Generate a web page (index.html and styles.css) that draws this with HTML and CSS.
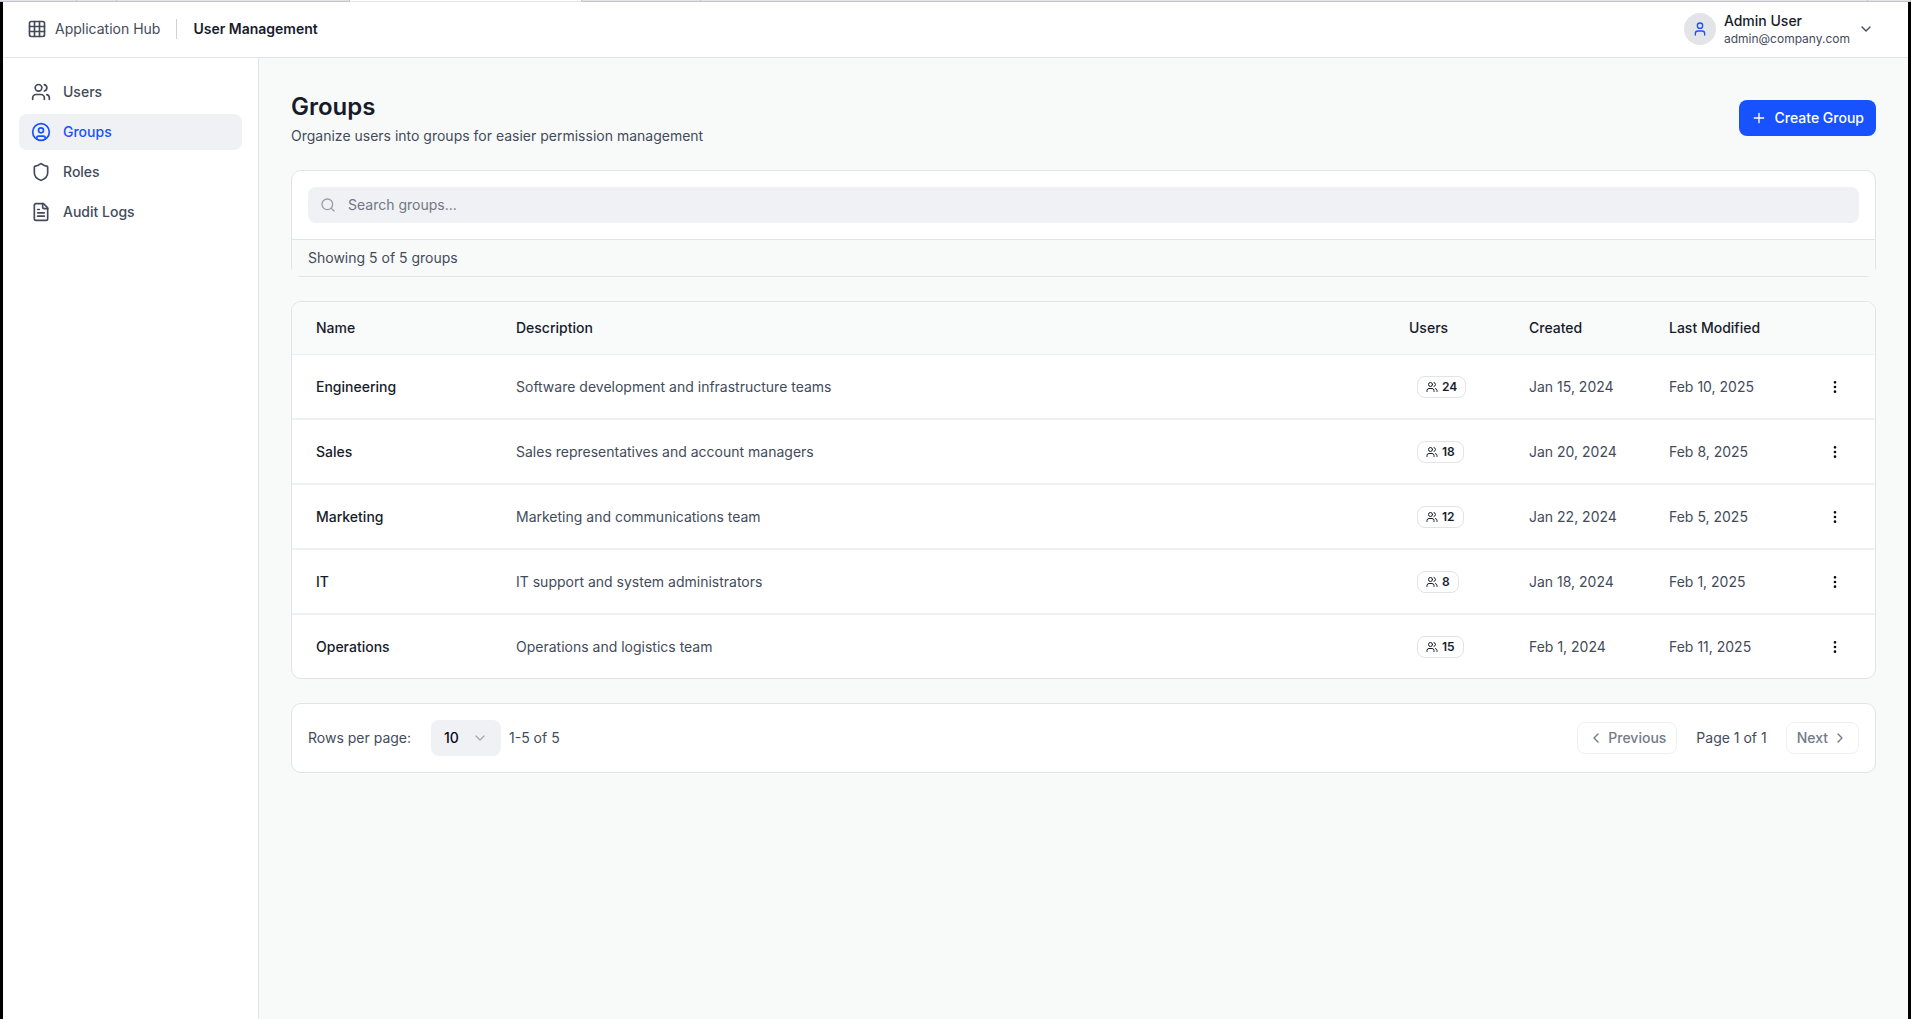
FILE: index.html
```html
<!DOCTYPE html>
<html lang="en">
<head>
<meta charset="utf-8">
<meta name="viewport" content="width=device-width, initial-scale=1">
<title>User Management – Groups</title>
<link rel="stylesheet" href="styles.css">
</head>
<body>
<svg class="sprite" aria-hidden="true">
  <symbol id="i-grid" viewBox="0 0 24 24"><rect width="18" height="18" x="3" y="3" rx="2"/><path d="M3 9h18M3 15h18M9 3v18M15 3v18"/></symbol>
  <symbol id="i-users" viewBox="0 0 24 24"><path d="M16 21v-2a4 4 0 0 0-4-4H6a4 4 0 0 0-4 4v2"/><circle cx="9" cy="7" r="4"/><path d="M22 21v-2a4 4 0 0 0-3-3.87M16 3.13a4 4 0 0 1 0 7.75"/></symbol>
  <symbol id="i-group" viewBox="0 0 24 24"><circle cx="12" cy="12" r="10"/><circle cx="12" cy="10" r="3"/><path d="M7 20.662V19a2 2 0 0 1 2-2h6a2 2 0 0 1 2 2v1.662"/></symbol>
  <symbol id="i-shield" viewBox="0 0 24 24"><path d="M20 13c0 5-3.5 7.5-7.66 8.95a1 1 0 0 1-.67-.01C7.5 20.5 4 18 4 13V6a1 1 0 0 1 1-1c2 0 4.500-1.200 6.240-2.720a1.170 1.170 0 0 1 1.520 0C14.510 3.810 17 5 19 5a1 1 0 0 1 1 1z"/></symbol>
  <symbol id="i-file" viewBox="0 0 24 24"><path d="M15 2H6a2 2 0 0 0-2 2v16a2 2 0 0 0 2 2h12a2 2 0 0 0 2-2V7Z"/><path d="M14 2v4a2 2 0 0 0 2 2h4M10 9H8M16 13H8M16 17H8"/></symbol>
  <symbol id="i-user" viewBox="0 0 24 24"><path d="M19 21v-2a4 4 0 0 0-4-4H9a4 4 0 0 0-4 4v2"/><circle cx="12" cy="7" r="4"/></symbol>
  <symbol id="i-down" viewBox="0 0 24 24"><path d="m6 9 6 6 6-6"/></symbol>
  <symbol id="i-left" viewBox="0 0 24 24"><path d="m15 18-6-6 6-6"/></symbol>
  <symbol id="i-right" viewBox="0 0 24 24"><path d="m9 18 6-6-6-6"/></symbol>
  <symbol id="i-plus" viewBox="0 0 24 24"><path d="M5 12h14M12 5v14"/></symbol>
  <symbol id="i-search" viewBox="0 0 24 24"><circle cx="11" cy="11" r="8"/><path d="m21 21-4.300-4.300"/></symbol>
  <symbol id="i-more" viewBox="0 0 24 24"><circle cx="12" cy="12" r="1"/><circle cx="12" cy="5" r="1"/><circle cx="12" cy="19" r="1"/></symbol>
</svg>

<div class="tabstrip" aria-hidden="true"><span class="tab tab-a"></span><span class="tab tab-b"></span><span class="tab tab-c"></span><span class="tab tab-open"></span><span class="tab tab-d"></span><span class="tab tab-rest"></span><span class="tab tab-end"></span></div>

<div class="app">
  <header class="topbar">
    <a class="hub" href="#"><svg class="icon icon-lg"><use href="#i-grid"/></svg>Application Hub</a>
    <span class="divider"></span>
    <strong class="product">User Management</strong>
    <button class="account" type="button">
      <span class="avatar"><svg class="icon"><use href="#i-user"/></svg></span>
      <span class="who"><span class="who-name">Admin User</span><span class="who-mail">admin@company.com</span></span>
      <svg class="icon"><use href="#i-down"/></svg>
    </button>
  </header>

  <div class="body">
    <nav class="sidebar" aria-label="Main">
      <a class="nav-item" href="#"><svg class="icon icon-lg"><use href="#i-users"/></svg>Users</a>
      <a class="nav-item active" href="#" aria-current="page"><svg class="icon icon-lg"><use href="#i-group"/></svg>Groups</a>
      <a class="nav-item" href="#"><svg class="icon icon-lg"><use href="#i-shield"/></svg>Roles</a>
      <a class="nav-item" href="#"><svg class="icon icon-lg"><use href="#i-file"/></svg>Audit Logs</a>
    </nav>

    <main class="content">
      <div class="page-head">
        <div>
          <h1>Groups</h1>
          <p>Organize users into groups for easier permission management</p>
        </div>
        <button class="create" type="button"><svg class="icon"><use href="#i-plus"/></svg>Create Group</button>
      </div>

      <section class="card">
        <div class="card-row">
          <label class="search"><svg class="icon"><use href="#i-search"/></svg><input type="search" placeholder="Search groups..." aria-label="Search groups"></label>
        </div>
        <p class="count">Showing 5 of 5 groups</p>
      </section>

      <section class="card card-clip">
        <table>
          <colgroup><col class="c-name"><col><col class="c-users"><col class="c-date"><col class="c-date"><col class="c-menu"></colgroup>
          <thead>
            <tr><th>Name</th><th>Description</th><th>Users</th><th>Created</th><th>Last Modified</th><th aria-label="Actions"></th></tr>
          </thead>
          <tbody>
            <tr><td class="name">Engineering</td><td>Software development and infrastructure teams</td><td><button class="badge" type="button"><svg class="icon icon-sm"><use href="#i-users"/></svg>24</button></td><td>Jan 15, 2024</td><td>Feb 10, 2025</td><td><button class="more" type="button" aria-label="Engineering actions"><svg class="icon"><use href="#i-more"/></svg></button></td></tr>
            <tr><td class="name">Sales</td><td>Sales representatives and account managers</td><td><button class="badge" type="button"><svg class="icon icon-sm"><use href="#i-users"/></svg>18</button></td><td>Jan 20, 2024</td><td>Feb 8, 2025</td><td><button class="more" type="button" aria-label="Sales actions"><svg class="icon"><use href="#i-more"/></svg></button></td></tr>
            <tr><td class="name">Marketing</td><td>Marketing and communications team</td><td><button class="badge" type="button"><svg class="icon icon-sm"><use href="#i-users"/></svg>12</button></td><td>Jan 22, 2024</td><td>Feb 5, 2025</td><td><button class="more" type="button" aria-label="Marketing actions"><svg class="icon"><use href="#i-more"/></svg></button></td></tr>
            <tr><td class="name">IT</td><td>IT support and system administrators</td><td><button class="badge" type="button"><svg class="icon icon-sm"><use href="#i-users"/></svg>8</button></td><td>Jan 18, 2024</td><td>Feb 1, 2025</td><td><button class="more" type="button" aria-label="IT actions"><svg class="icon"><use href="#i-more"/></svg></button></td></tr>
            <tr><td class="name">Operations</td><td>Operations and logistics team</td><td><button class="badge" type="button"><svg class="icon icon-sm"><use href="#i-users"/></svg>15</button></td><td>Feb 1, 2024</td><td>Feb 11, 2025</td><td><button class="more" type="button" aria-label="Operations actions"><svg class="icon"><use href="#i-more"/></svg></button></td></tr>
          </tbody>
        </table>
      </section>

      <section class="card card-row pager">
        <label for="rows">Rows per page:</label>
        <span class="select"><select id="rows"><option>10</option><option>25</option><option>50</option></select><svg class="icon"><use href="#i-down"/></svg></span>
        <span>1-5 of 5</span>
        <div class="pages">
          <button class="step" type="button" disabled><svg class="icon"><use href="#i-left"/></svg>Previous</button>
          <span class="page-of">Page 1 of 1</span>
          <button class="step" type="button" disabled>Next<svg class="icon"><use href="#i-right"/></svg></button>
        </div>
      </section>
    </main>
  </div>
</div>
</body>
</html>
```
FILE: styles.css
```css
:root {
  --ink: #171c2b;
  --text: #434b5a;
  --line: #e1e3e6;
  --page: #f8faf9;
  --fill: #f0f1f4;
  --blue: #1852ff;
}

* { box-sizing: border-box; }

body {
  margin: 0;
  min-height: 100vh;
  display: flex;
  flex-direction: column;
  background: #fff;
  color: var(--text);
  font: 14px/20px Inter, "Liberation Sans", sans-serif;
}

h1, p { margin: 0; }
a { color: inherit; text-decoration: none; }
button, input, select { font: inherit; color: inherit; }
button { border: 0; background: none; padding: 0; }

.sprite { position: absolute; width: 0; height: 0; }

.icon {
  width: 16px;
  height: 16px;
  flex: none;
  fill: none;
  stroke: currentColor;
  stroke-width: 2;
  stroke-linecap: round;
  stroke-linejoin: round;
}
.icon-lg { width: 20px; height: 20px; }
.icon-sm { width: 12px; height: 12px; }

.tabstrip { display: flex; height: 2px; }
.tab { background: #e3e3e8; border-right: 1px solid #c3c3c9; border-bottom: 1px solid #c3c3c9; }
.tab-a { width: 77px; }
.tab-b { width: 40px; }
.tab-c { width: 233px; }
.tab-open { width: 232px; background: #fff; border-bottom-color: #e4e4e6; }
.tab-d { width: 119px; }
.tab-rest { flex: 1; }
.tab-end { width: 43px; }

.app {
  flex: 1;
  display: flex;
  flex-direction: column;
  border: solid #000;
  border-width: 0 3px;
}

.topbar {
  display: flex;
  align-items: center;
  gap: 16px;
  height: 56px;
  padding: 0 24px 1px;
  border-bottom: 1px solid var(--line);
}
.hub { display: flex; align-items: center; gap: 8px; }
.divider { width: 1px; height: 20px; background: #cfd2d8; }
.product { font-weight: 600; color: var(--ink); }
.account { display: flex; align-items: center; gap: 8px; margin-left: auto; padding: 0 10px; text-align: left; }
.avatar {
  display: grid;
  place-items: center;
  width: 32px;
  height: 32px;
  border-radius: 50%;
  background: #e3e4e8;
  color: var(--blue);
}
.who { display: flex; flex-direction: column; }
.who-name { font-weight: 500; color: var(--ink); }
.who-mail { font-size: 12px; line-height: 16px; }

.body { flex: 1; display: flex; }
.sidebar {
  display: flex;
  flex-direction: column;
  gap: 4px;
  width: 256px;
  flex: none;
  padding: 16px;
  border-right: 1px solid var(--line);
}
.nav-item {
  display: flex;
  align-items: center;
  gap: 12px;
  padding: 8px 12px;
  border-radius: 8px;
  font-weight: 500;
}
.nav-item.active { background: var(--fill); color: var(--blue); }

.content {
  flex: 1;
  min-width: 0;
  display: flex;
  flex-direction: column;
  gap: 24px;
  padding: 32px;
  background: var(--page);
}
.page-head { display: flex; align-items: center; justify-content: space-between; }
h1 { margin-bottom: 2px; font-size: 24px; line-height: 34px; font-weight: 600; color: var(--ink); }
.create {
  display: flex;
  align-items: center;
  gap: 8px;
  height: 36px;
  padding: 0 12px;
  border-radius: 8px;
  background: var(--blue);
  color: #fff;
  font-weight: 500;
}

.card { border: 1px solid var(--line); border-radius: 10px; background: #fff; }
.card-clip { overflow: hidden; }
.card-row { padding: 16px; }
.search {
  display: flex;
  align-items: center;
  gap: 12px;
  height: 36px;
  padding: 0 12px;
  border-radius: 8px;
  background: var(--fill);
  color: #989ea9;
}
.search input { flex: 1; border: 0; padding: 0; background: none; outline: 0; }
.search input::placeholder { color: #717784; opacity: 1; }
.count { padding: 8px 16px; border-top: 1px solid var(--line); background: var(--page); }

table { width: 100%; table-layout: fixed; border-collapse: separate; border-spacing: 0; }
.c-name { width: 200px; }
.c-users { width: 120px; }
.c-date { width: 140px; }
.c-menu { width: 90px; }
th, td { padding: 0 24px; text-align: left; white-space: nowrap; }
th { height: 53px; background: #f9fafa; border-bottom: 1px solid #eeeff3; font-weight: 500; color: var(--ink); }
td { height: 65px; border-bottom: 2px solid #eff0f1; }
tr:last-child td { height: 63px; border-bottom: 0; }
td.name { font-weight: 500; color: var(--ink); }
.badge {
  display: flex;
  align-items: center;
  gap: 4px;
  margin-left: 8px;
  padding: 2px 8px;
  border: 1px solid var(--line);
  border-radius: 8px;
  font-size: 12px;
  line-height: 16px;
  font-weight: 600;
  color: var(--ink);
}
.more { display: grid; place-items: center; width: 32px; height: 32px; margin-left: auto; color: #0a0a14; }

.pager { display: flex; align-items: center; gap: 8px; }
.select { display: grid; align-items: center; width: 70px; margin-left: 12px; }
.select select {
  grid-area: 1 / 1;
  appearance: none;
  height: 36px;
  padding: 0 13px;
  border: 0;
  border-radius: 8px;
  background: var(--fill);
  color: #0a0a14;
  font-weight: 500;
}
.select .icon { grid-area: 1 / 1; justify-self: end; margin-right: 13px; color: #a3a8b1; pointer-events: none; }
.pages { display: flex; align-items: center; gap: 19px; margin-left: auto; }
.step {
  display: flex;
  align-items: center;
  gap: 4px;
  height: 32px;
  padding: 0 10px;
  border: 1px solid #eff0f2;
  border-radius: 8px;
  font-weight: 500;
  color: #747a87;
}
```
